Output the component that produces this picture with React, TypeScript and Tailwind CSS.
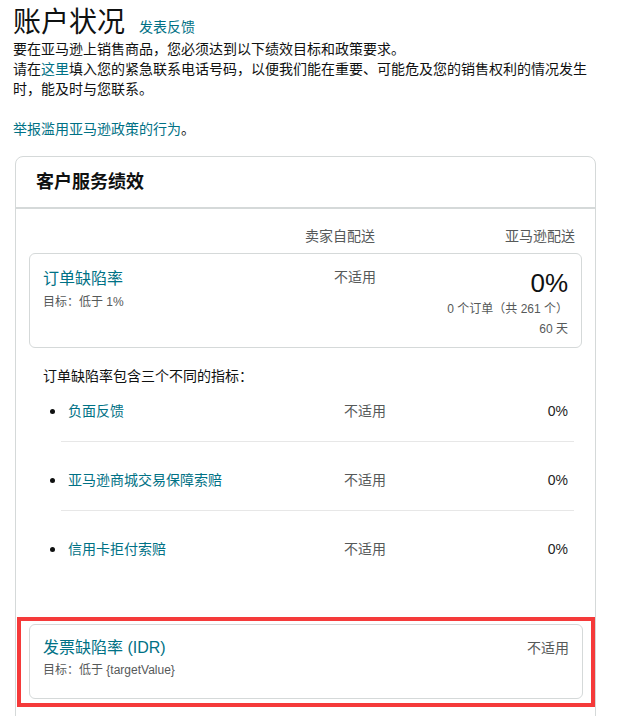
import React from "react";

const FONT = { fontFamily: '"Liberation Sans", "Noto Sans CJK SC", sans-serif' };

function Bullet() {
  return <span className="block w-[5px] h-[5px] rounded-full bg-[#0f1111]" />;
}

const rows = [
  { name: "负面反馈" },
  { name: "亚马逊商城交易保障索赔" },
  { name: "信用卡拒付索赔" },
];

export default function App() {
  return (
    <div style={FONT} className="bg-white text-[#0f1111] pl-[13px] pr-[21px] pt-[7px] pb-[40px] min-h-[716px]">
      <div className="flex items-baseline">
        <h1 className="text-[28px] leading-[32px] font-normal">账户状况</h1>
        <a className="ml-[14px] text-[14px] leading-[20px] text-[#007185]">发表反馈</a>
      </div>
      <p className="text-[14px] leading-[20px]">要在亚马逊上销售商品，您必须达到以下绩效目标和政策要求。</p>
      <p className="text-[14px] leading-[20px]">
        请在<a className="text-[#007185]">这里</a>填入您的紧急联系电话号码，以便我们能在重要、可能危及您的销售权利的情况发生时，能及时与您联系。
      </p>
      <p className="mt-[20px] text-[14px] leading-[20px]">
        <a className="text-[#007185]">举报滥用亚马逊政策的行为</a>。
      </p>

      <div className="mt-[17px] ml-[2px] w-[581px] border border-[#d5d9d9] rounded-[8px]">
        <div className="h-[52px] flex items-center pl-[20px] border-b-2 border-[#d5d9d9]">
          <h2 className="text-[18px] leading-[24px] font-bold">客户服务绩效</h2>
        </div>

        <div className="pt-[17px] px-[13px] pb-[20px] flex flex-col">
          <div className="flex text-[14px] leading-[20px] text-[#565959]">
            <div className="w-[346px] text-right">卖家自配送</div>
            <div className="flex-1 text-right pr-[7px]">亚马逊配送</div>
          </div>

          <div className="mt-[7px] h-[95px] border border-[#d5d9d9] rounded-[6px] pt-[13px] px-[13px] flex">
            <div className="w-[250px]">
              <div className="text-[16px] leading-[24px] text-[#007185]">订单缺陷率</div>
              <div className="mt-[2px] text-[12px] leading-[18px] text-[#565959]">目标：低于 1%</div>
            </div>
            <div className="w-[83px] text-right text-[14px] leading-[20px] text-[#565959]">不适用</div>
            <div className="flex-1 flex flex-col items-end">
              <div className="text-[26px] leading-[32px]">0%</div>
              <div className="text-[12px] leading-[20px] text-[#565959]">0 个订单（共 261 个）</div>
              <div className="mt-[1px] text-[12px] leading-[18px] text-[#565959]">60 天</div>
            </div>
          </div>

          <p className="mt-[18px] pl-[14px] text-[14px] leading-[20px]">订单缺陷率包含三个不同的指标：</p>

          <ul className="mt-[15px]">
            {rows.map((r, i) => (
              <li key={r.name} className="flex">
                <div className="w-[32px] flex justify-end pr-[6px]">
                  <div className={`${i === 0 ? "" : "pt-[28px]"} h-fit`}>
                    <div className="h-[20px] flex items-center">
                      <Bullet />
                    </div>
                  </div>
                </div>
                <div
                  className={`w-[513px] flex items-center text-[14px] leading-[20px] ${
                    i === 0 ? "" : "pt-[28px]"
                  } ${i === rows.length - 1 ? "" : "pb-[20px] border-b border-[#e7e7e7]"}`}
                >
                  <div className="w-[283px] pl-[7px] text-[#007185]">{r.name}</div>
                  <div className="text-[#565959]">不适用</div>
                  <div className="ml-auto pr-[6px] text-[#232323]">0%</div>
                </div>
              </li>
            ))}
          </ul>
        </div>

        <div className="mt-[38px] ml-[1px] w-[578px] border-4 border-[#f53a3a] px-[8px] pt-[3px] pb-[4px]">
          <div className="h-[75px] border border-[#d5d9d9] rounded-[6px] pt-[12px] px-[13px] flex">
            <div className="flex-1">
              <div className="text-[16px] leading-[22px] text-[#007185]">发票缺陷率 (IDR)</div>
              <div className="mt-[2px] text-[12px] leading-[18px] text-[#565959]">目标：低于 {"{targetValue}"}</div>
            </div>
            <div className="text-[14px] leading-[22px] text-[#565959]">不适用</div>
          </div>
        </div>
        <div className="h-[40px]" />
      </div>
    </div>
  );
}
